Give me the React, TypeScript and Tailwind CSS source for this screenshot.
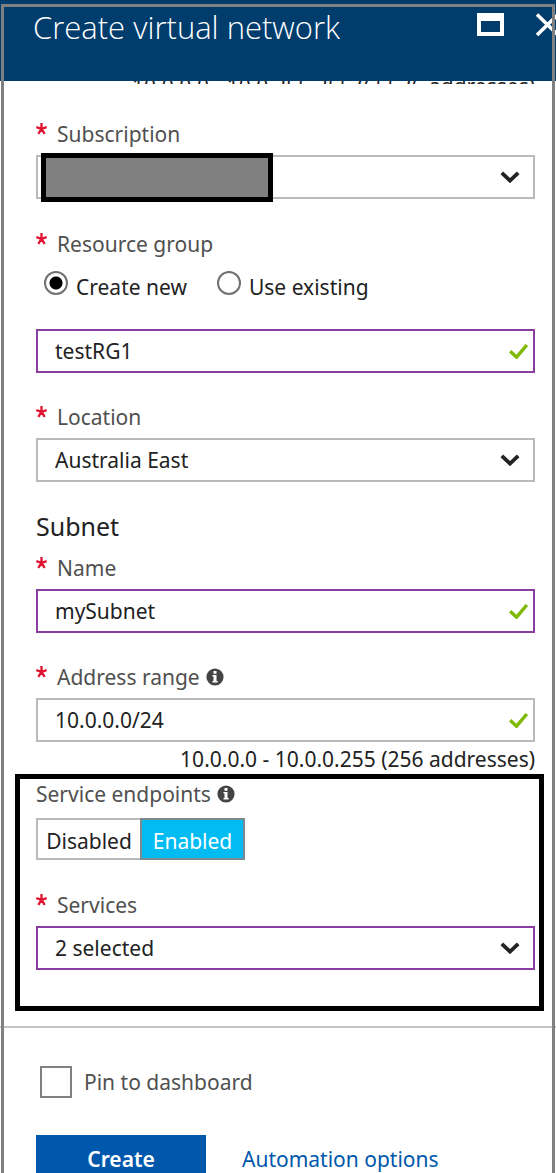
import { useState } from "react";
import type { ReactNode } from "react";

function Chevron() {
  return (
    <svg className="pointer-events-none absolute right-[15px] top-1/2 h-3 w-5 -translate-y-1/2" viewBox="0 0 20 12" fill="none" aria-hidden="true">
      <path d="M1.8 1.8 L10 9.6 L18.2 1.8" stroke="#222426" strokeWidth="3.8" />
    </svg>
  );
}

function Tick() {
  return (
    <svg className="pointer-events-none absolute right-[6px] top-1/2 h-4 w-5 -translate-y-1/2" viewBox="0 0 20 16" fill="none" aria-hidden="true">
      <path d="M1.2 8.2 L7.6 14.2 L17.8 2" stroke="#7fba00" strokeWidth="3.4" />
    </svg>
  );
}

function Info() {
  return (
    <svg className="ml-[6px] h-[18px] w-[18px]" viewBox="0 0 18 18" aria-hidden="true">
      <circle cx="9" cy="9" r="8.6" fill="#444" />
      <rect x="7.5" y="3" width="3" height="2.8" fill="#fff" />
      <path d="M6.5 7h4v6h1.2v1.6H6.5V13h1V8.6h-1z" fill="#fff" />
    </svg>
  );
}

function Star() {
  return (
    <svg className="mr-[10px] mt-[3px] h-3 w-[11px] self-start" viewBox="0 0 11 12" fill="none" stroke="#e01230" strokeWidth="2.3" aria-hidden="true">
      <path d="M5.5 0v6M0.3 4.2l5.2 1.6M10.7 4.2L5.5 5.8M2.3 10.8l3.2-5M8.7 10.8l-3.2-5" />
    </svg>
  );
}

function Label({ id, children, info }: { id: string; children: ReactNode; info?: boolean }) {
  return (
    <div className="mb-[7px] flex h-7 items-center text-[#505050]">
      <Star />
      <label htmlFor={id}>{children}</label>
      {info && <Info />}
    </div>
  );
}

const field = "block h-11 w-full appearance-none rounded-none border-2 bg-white pl-[17px] pr-12 text-[#222] outline-none";

function TextField({ id, value, edited }: { id: string; value: string; edited?: boolean }) {
  return (
    <div className="relative">
      <input id={id} type="text" defaultValue={value} className={`${field} ${edited ? "border-[#8a3fa0]" : "border-[#bababa]"}`} />
      <Tick />
    </div>
  );
}

function Select({ id, value, edited, children }: { id: string; value: string; edited?: boolean; children?: ReactNode }) {
  return (
    <div className="relative">
      <select id={id} className={`${field} ${edited ? "border-[#8a3fa0]" : "border-[#bababa]"}`}>
        <option>{value}</option>
      </select>
      {children}
      <Chevron />
    </div>
  );
}

function Radio({ label, checked, onChange }: { label: string; checked: boolean; onChange: () => void }) {
  return (
    <label className="flex items-start gap-2">
      <input
        type="radio"
        name="group"
        checked={checked}
        onChange={onChange}
        className="h-6 w-6 appearance-none rounded-full border-2 border-[#707070] bg-white checked:bg-[radial-gradient(circle,#000_6px,#fff_7px)]"
      />
      <span className="pt-0.5">{label}</span>
    </label>
  );
}

export default function App() {
  const [createNew, setCreateNew] = useState(true);
  const [enabled, setEnabled] = useState(true);
  const on = "border-[#7a8a90] bg-[#00bcf2] text-white";
  const off = "border-[#bababa] bg-white text-[#222]";

  return (
    <div className="relative flex h-screen flex-col overflow-hidden bg-white font-['Noto_Sans',sans-serif] text-[21px] leading-7 text-[#222]">
      <header className="flex h-[81px] shrink-0 items-start bg-[#003c6c] pl-[33px] text-white">
        <h1 className="flex-1 pt-1.5 font-['Open_Sans',sans-serif] text-[31px] font-light leading-[42px]">Create virtual network</h1>
        <button type="button" aria-label="Maximize" className="mt-[13px] h-6 w-7">
          <svg viewBox="0 0 28 24" className="h-6 w-7" aria-hidden="true">
            <path fillRule="evenodd" d="M1 0h27v23H1zM5 8v11h19V8z" fill="#fff" />
          </svg>
        </button>
        <button type="button" aria-label="Close" className="ml-8 mt-[13px] h-6 w-5 overflow-hidden">
          <svg viewBox="0 0 20 24" className="h-6 w-5" fill="none" aria-hidden="true">
            <path d="M1 1.5l21 20.5M1 22l21-20.5" stroke="#fff" strokeWidth="3.6" />
          </svg>
        </button>
      </header>

      <main className="shrink-0 overflow-hidden">
        <div className="pl-9 pr-[21px]">
          <div className="mb-9 flex h-[3px] items-start justify-end overflow-hidden">
            <p className="-mt-[9px] shrink-0">10.0.0.0 - 10.0.255.255 (65536 addresses)</p>
          </div>

          <Label id="subscription">Subscription</Label>
          <Select id="subscription" value="">
            <span className="absolute -bottom-[3px] -top-0.5 left-[5px] w-[232px] border-[5px] border-black bg-[#808080]" />
          </Select>

          <fieldset className="mt-[31px]">
            <Label id="group-name">Resource group</Label>
            <div className="mb-7 mt-[13px] flex gap-[30px] pl-2">
              <Radio label="Create new" checked={createNew} onChange={() => setCreateNew(true)} />
              <Radio label="Use existing" checked={!createNew} onChange={() => setCreateNew(false)} />
            </div>
            <TextField id="group-name" value="testRG1" edited />
          </fieldset>

          <div className="mt-[30px]">
            <Label id="location">Location</Label>
            <Select id="location" value="Australia East" />
          </div>

          <h2 className="mt-7 text-[25px] leading-8">Subnet</h2>
          <div className="mt-3">
            <Label id="subnet-name">Name</Label>
            <TextField id="subnet-name" value="mySubnet" edited />
          </div>
          <div className="mt-[30px]">
            <Label id="range" info>Address range</Label>
            <TextField id="range" value="10.0.0.0/24" />
            <p className="mb-px mt-[3px] text-right">10.0.0.0 - 10.0.0.255 (256 addresses)</p>
          </div>
        </div>

        <section className="ml-[15px] mr-3 border-[5px] border-black pb-9 pl-4 pr-1 pt-px">
          <div className="flex items-center text-[#505050]">
            <span id="endpoints">Service endpoints</span>
            <Info />
          </div>
          <div role="group" aria-labelledby="endpoints" className="mt-[10px] flex h-[42px]">
            <button type="button" aria-pressed={!enabled} onClick={() => setEnabled(false)} className={`w-[104px] border-2 border-r-0 pt-1 ${enabled ? off : on}`}>Disabled</button>
            <button type="button" aria-pressed={enabled} onClick={() => setEnabled(true)} className={`w-[105px] border-2 pt-1 ${enabled ? on : off}`}>Enabled</button>
          </div>
          <div className="mt-[31px]">
            <Label id="services">Services</Label>
            <Select id="services" value="2 selected" edited />
          </div>
        </section>
      </main>

      <footer className="mt-[15px] shrink-0 border-t-2 border-[#c4c4c4] pl-9 pr-[21px] pt-[38px]">
        <label className="ml-1 flex items-center gap-3 text-[#505050]">
          <input type="checkbox" className="h-8 w-8 appearance-none border-2 border-[#808080] bg-white checked:bg-[#0058ad]" />
          Pin to dashboard
        </label>
        <div className="mt-[37px] flex items-center gap-9">
          <button type="button" className="h-12 w-[170px] bg-[#0058ad] font-semibold text-white">Create</button>
          <a href="#automation" className="text-[#0058ad]">Automation options</a>
        </div>
      </footer>

      <div className="pointer-events-none absolute -bottom-1 left-px right-px top-1 border-[3px] border-[#808080]" />
    </div>
  );
}
